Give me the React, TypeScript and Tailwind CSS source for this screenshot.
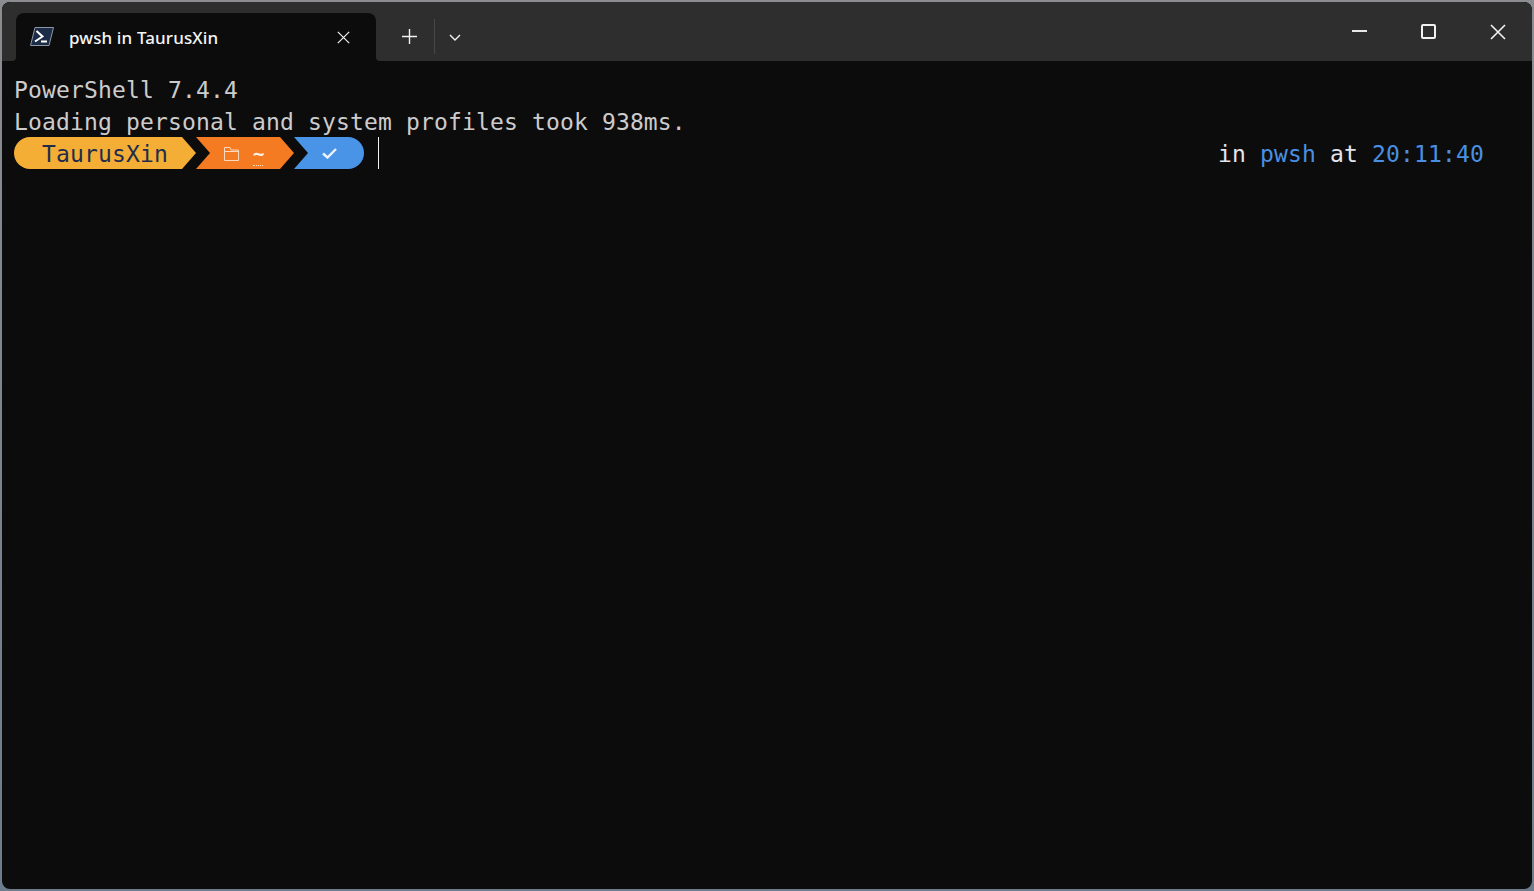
const PwshIcon = () => (
  <svg width="24" height="19" viewBox="0 0 24 19" className="ml-[14px] shrink-0">
    <path d="M5 0.5H23.5L19 18.5H0.5Z" fill="#1c2c47" stroke="#8c97a8" strokeWidth="1" />
    <path d="M6.5 4L12.5 9.5L5 14.5" fill="none" stroke="#ffffff" strokeWidth="2" />
    <path d="M11 14.5H17" fill="none" stroke="#ffffff" strokeWidth="2" />
  </svg>
);

const CloseIcon = ({ size, stroke }: { size: number; stroke: number }) => (
  <svg width={size} height={size} viewBox="0 0 16 16" className="shrink-0">
    <path d="M1 1L15 15M15 1L1 15" stroke="#f2f2f2" strokeWidth={(16 / size) * stroke} fill="none" />
  </svg>
);

const TitleBar = () => (
  <div className="flex h-[59px] w-full bg-[#0c0c0c] rounded-t-[8px]">
    <div className="w-[14px] bg-[#2e2e2e] rounded-tl-[8px] rounded-br-[4px]"></div>
    <div className="bg-[#2e2e2e] pt-[11px]">
      <div className="flex items-center w-[360px] h-[48px] bg-[#0c0c0c] rounded-t-[8px] pb-[1px]">
        <PwshIcon />
        <span className="ml-[15px] mt-[2px] text-[17px] tracking-[0.12px] font-medium text-[#f4f4f4] font-['Noto_Sans','Liberation_Sans',sans-serif]">
          pwsh in TaurusXin
        </span>
        <div className="ml-auto mr-[26px] mt-[1px]">
          <CloseIcon size={13} stroke={1.2} />
        </div>
      </div>
    </div>
    <div className="flex-1 flex bg-[#2e2e2e] rounded-tr-[8px] rounded-bl-[4px]">
      <div className="flex items-start pt-[18px]">
        <svg width="15" height="15" viewBox="0 0 15 15" className="ml-[26px] mt-[9px]">
          <path d="M7.5 0V15M0 7.5H15" stroke="#f2f2f2" strokeWidth="1.4" fill="none" />
        </svg>
        <div className="ml-[17px] -mt-[1px] w-[1px] h-[35px] bg-[#474747]"></div>
        <svg width="12" height="7" viewBox="0 0 12 7" className="ml-[14px] mt-[14px]">
          <path d="M1 1L6 6L11 1" stroke="#f2f2f2" strokeWidth="1.4" fill="none" />
        </svg>
      </div>
      <div className="ml-auto flex items-start pt-[22px] pr-[26px]">
        <div className="w-[15px] h-[2px] bg-[#e8e8e8] mt-[6px]"></div>
        <div className="ml-[54px] w-[15px] h-[15px] rounded-[2px] border-2 border-[#f2f2f2]"></div>
        <div className="ml-[54px]">
          <CloseIcon size={16} stroke={1.6} />
        </div>
      </div>
    </div>
  </div>
);

const Prompt = () => (
  <div className="flex items-center h-[32px] -mt-[1px]">
    {/* yellow segment */}
    <div className="flex w-[182px] h-[32px] text-[#1f2d4d]">
      <div className="w-[168px] h-full bg-[#f5ae35] rounded-l-full pl-[28px] pt-[1px]">TaurusXin</div>
      <div className="w-[14px] h-full bg-[#f5ae35] [clip-path:polygon(0_0,0_100%,100%_50%)]"></div>
    </div>
    {/* orange segment */}
    <div className="w-[98px] h-[32px] bg-[#f47b22] [clip-path:polygon(0_0,84px_0,100%_50%,84px_100%,0_100%,14px_50%)] flex items-center pl-[28px] text-[#fbe0c8]">
      <svg width="15" height="14" viewBox="0 0 15 14" className="shrink-0 mt-[1px]">
        <path d="M0.5 13.5V0.5H6L7 3H14.5V13.5ZM0.5 4.5H14.5" fill="none" stroke="#fbd9bf" strokeWidth="1" />
      </svg>
      <span className="relative ml-[14px] w-[11px] text-[19px] leading-[32px] font-bold text-[#fdf0e4]">
        ~
        <span className="absolute left-0 top-[28px] w-[10px] border-b border-dotted border-[#fbe0c8]"></span>
      </span>
    </div>
    {/* blue segment */}
    <div className="w-[70px] h-[32px] bg-[#4a94e8] rounded-r-full [clip-path:polygon(0_0,100%_0,100%_100%,0_100%,14px_50%)] flex items-center pl-[28px]">
      <svg width="15" height="11" viewBox="0 0 15 11" className="shrink-0">
        <path d="M1 5.5L5.5 9.5L14 1" fill="none" stroke="#eef4fc" strokeWidth="2.4" />
      </svg>
    </div>
    <div className="ml-[14px] w-[1px] h-[32px] bg-[#f2f2f2]"></div>
    <div className="ml-auto mt-[2px] pr-[48px] whitespace-pre text-[#e4e4ec]">
      in <span className="text-[#4a90e2]">pwsh</span> at <span className="text-[#4a90e2]">20:11:40</span>
    </div>
  </div>
);

const App = () => {
  return (
    <div className="h-[891px] w-[1534px] overflow-hidden bg-gradient-to-b from-[#8b8d90] to-[#6d7c8c] p-[2px]">
      <div className="flex flex-col h-full w-full bg-[#0c0c0c] rounded-[8px] overflow-hidden">
        <TitleBar />
        <div className="flex-1 pt-[13px] pl-[12px] text-[23px] leading-[32px] tracking-[0.15px] text-[#cccccc] font-['DejaVu_Sans_Mono',monospace]">
          <div className="h-[32px] whitespace-pre">PowerShell 7.4.4</div>
          <div className="h-[32px] whitespace-pre">Loading personal and system profiles took 938ms.</div>
          <Prompt />
        </div>
      </div>
    </div>
  );
};

export default App;
